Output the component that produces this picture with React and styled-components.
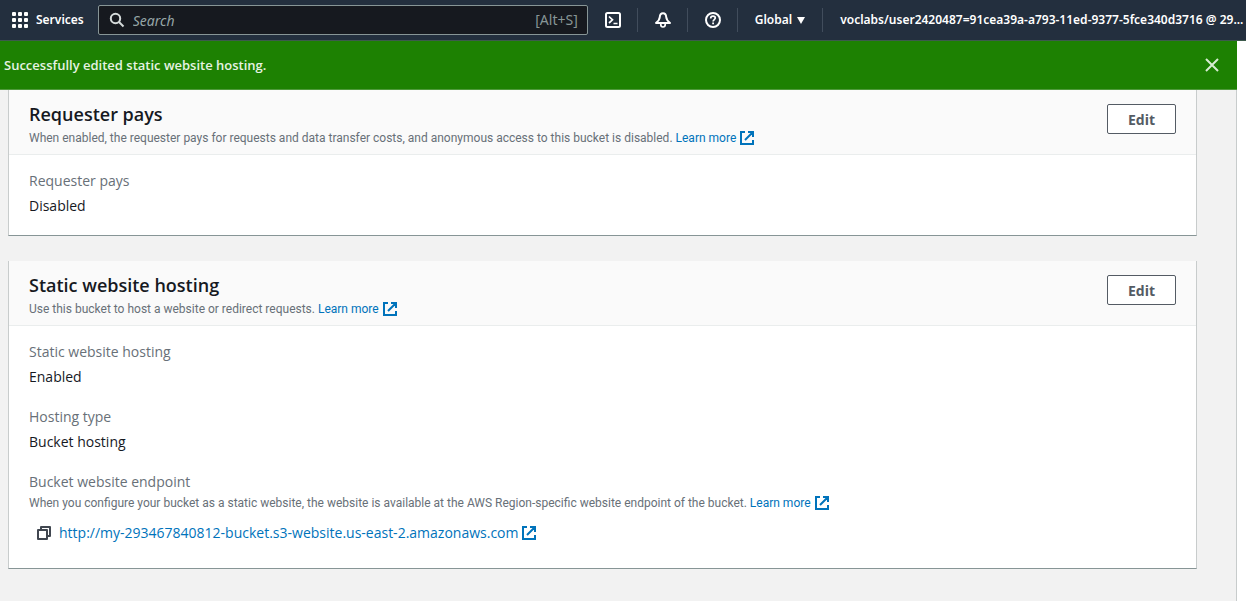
import React from "react";
import styled, { createGlobalStyle } from "styled-components";

const GlobalStyle = createGlobalStyle`
  *, *::before, *::after { box-sizing: border-box; }
  body {
    margin: 0;
    background: #f2f2f2;
    color: #16191f;
    font-family: "Open Sans", "Noto Sans", sans-serif;
    font-size: 14px;
    line-height: 20px;
  }
  button, input { font-family: inherit; }
`;

const Page = styled.div`
  display: flex;
  flex-direction: column;
  min-height: 100vh;
`;

const TopNav = styled.header`
  display: flex;
  align-items: center;
  height: 41px;
  background: #232f3e;
  border-bottom: 1px solid #3d5a4c;
  color: #fff;
  font-family: "Noto Sans", "Open Sans", sans-serif;
`;

const NavButton = styled.button`
  display: flex;
  align-items: center;
  justify-content: center;
  gap: ${(p) => p.$gap || 0}px;
  height: 24px;
  flex: none;
  padding: 0 ${(p) => p.$end ?? 17}px 0 ${(p) => p.$start ?? 17}px;
  border: 0;
  background: none;
  color: #fff;
  font-size: 12px;
  font-weight: 600;
  line-height: 16px;
  white-space: nowrap;
`;

const IconButton = styled(NavButton)`
  width: 49px;
  padding: 0 0 0 1px;
`;

const Divided = styled.div`
  display: flex;
  flex: none;
  border-right: 1px solid #414d5c;
`;

const SearchBox = styled.label`
  display: flex;
  align-items: center;
  flex: 0 1 490px;
  gap: 8px;
  height: 30px;
  padding: 0 9px 0 10px;
  border: 1px solid #879596;
  border-radius: 2px;
  background: #16191f;
  color: #d5dbdb;
`;

const SearchInput = styled.input`
  flex: 1;
  min-width: 0;
  padding: 0;
  border: 0;
  outline: 0;
  background: none;
  color: #fff;
  font-size: 14px;
  &::placeholder {
    color: #95a5a6;
    font-style: italic;
    opacity: 1;
  }
`;

const Shortcut = styled.span`
  color: #879596;
  font-size: 14px;
`;

const Body = styled.div`
  flex: 1;
  display: flex;
  flex-direction: column;
  margin-right: 9px;
  box-shadow: 9px 0 0 #fff;
`;

const Flash = styled.div`
  display: flex;
  align-items: center;
  justify-content: space-between;
  height: 49px;
  padding: 0 17px 0 4px;
  background: #1d8102;
  border-bottom: 1px solid #4f9a3c;
  color: #e6f3e2;
  font-size: 13px;
  font-weight: 600;
`;

const CloseButton = styled.button`
  display: flex;
  padding: 0;
  border: 0;
  background: none;
  color: #d8ecd3;
`;

const Main = styled.main`
  flex: 1;
  display: flex;
  flex-direction: column;
  gap: 25px;
  padding: 0 39px 32px 8px;
  border-right: 1px solid #c8cccc;
`;

const Panel = styled.section`
  background: #fff;
  border: solid #c8cccc;
  border-width: 0 1px;
  border-bottom: 1px solid #879596;
`;

const PanelHeader = styled.div`
  display: flex;
  align-items: flex-start;
  justify-content: space-between;
  padding: 14px 20px 6px;
  background: #fafafa;
  border-bottom: 1px solid #eaeded;
`;

const Title = styled.h2`
  margin: 0;
  font-size: 18px;
  font-weight: 600;
  line-height: 20px;
`;

const Hint = styled.p`
  margin: 0;
  padding-top: ${(p) => p.$gap}px;
  color: #687078;
  font-family: Roboto, "Noto Sans", sans-serif;
  font-size: 12px;
  line-height: 20px;
`;

const EditButton = styled.button`
  width: 69px;
  height: 30px;
  padding: 0;
  border: 1px solid #545b64;
  border-radius: 2px;
  background: #fff;
  color: #545b64;
  font-size: 14px;
  font-weight: 700;
`;

const Fields = styled.dl`
  display: flex;
  flex-direction: column;
  gap: 20px;
  margin: 0;
  padding: 16px 20px 19px;
`;

const Term = styled.dt`
  color: #687078;
`;

const Value = styled.dd`
  margin: 0;
  padding-top: 5px;
`;

const Endpoint = styled.dd`
  display: flex;
  align-items: center;
  gap: 8px;
  margin: 0;
  padding: 10px 8px 6px;
`;

const CopyButton = styled.button`
  display: flex;
  padding: 0;
  border: 0;
  background: none;
  color: #414750;
`;

const Link = styled.a`
  display: inline-flex;
  align-items: center;
  gap: 4px;
  color: #0073bb;
  text-decoration: none;
`;

const ExternalIcon = () => (
  <svg width="14" height="14" viewBox="0 0 14 14" fill="none" stroke="currentColor" strokeWidth="2" aria-hidden="true">
    <path d="M5 1H1v12h12V9M8 1h5v5M13 1 5 9" />
  </svg>
);

const ExternalLink = ({ children }) => (
  <Link href="#">
    {children}
    <ExternalIcon />
  </Link>
);

const SettingsPanel = ({ title, hint, children }) => (
  <Panel>
    <PanelHeader>
      <div>
        <Title>{title}</Title>
        <Hint $gap={4}>
          {hint} <ExternalLink>Learn more</ExternalLink>
        </Hint>
      </div>
      <EditButton type="button">Edit</EditButton>
    </PanelHeader>
    <Fields>{children}</Fields>
  </Panel>
);

const Field = ({ label, value }) => (
  <div>
    <Term>{label}</Term>
    <Value>{value}</Value>
  </div>
);

export default function App() {
  return (
    <Page>
      <GlobalStyle />
      <TopNav>
        <NavButton type="button" $gap={8} $start={12} $end={14}>
          <svg width="16" height="16" viewBox="0 0 16 16" fill="currentColor" aria-hidden="true">
            {[0, 6, 12].map((y) => [0, 6, 12].map((x) => <rect key={`${x}-${y}`} x={x} y={y} width="4" height="4" rx="1" />))}
          </svg>
          Services
        </NavButton>
        <SearchBox>
          <svg width="16" height="16" viewBox="0 0 16 16" fill="none" stroke="currentColor" strokeWidth="2" aria-hidden="true">
            <circle cx="6.5" cy="6.5" r="4.7" />
            <path d="m10 10 4.5 4.5" />
          </svg>
          <SearchInput type="text" placeholder="Search" aria-label="Search" />
          <Shortcut>[Alt+S]</Shortcut>
        </SearchBox>
        <Divided>
          <IconButton type="button" aria-label="CloudShell">
            <svg width="16" height="16" viewBox="0 0 16 16" fill="none" stroke="currentColor" strokeWidth="2" aria-hidden="true">
              <rect x="1" y="1" width="14" height="14" rx="1.5" />
              <path d="m4 4.5 3.5 3.3L4 11M8.5 11.5h4" strokeWidth="1.7" />
            </svg>
          </IconButton>
        </Divided>
        <Divided>
          <IconButton type="button" aria-label="Notifications">
            <svg width="16" height="16" viewBox="0 0 16 16" fill="none" stroke="currentColor" strokeWidth="2" strokeLinejoin="round" aria-hidden="true">
              <path d="M8 1.2C6 1.2 4.9 2.7 4.8 5 4.6 7.5 3.5 9 1 11h14c-2.5-2-3.600-3.500-3.800-6C11.100 2.700 10 1.200 8 1.200Z" />
              <path d="M5.800 11.500v1.300c0 1.300.9 2.200 2.200 2.200s2.200-.9 2.200-2.200v-1.300" strokeWidth="1.700" />
            </svg>
          </IconButton>
        </Divided>
        <Divided>
          <IconButton type="button" aria-label="Help">
            <svg width="16" height="16" viewBox="0 0 16 16" fill="none" stroke="currentColor" strokeWidth="2" aria-hidden="true">
              <circle cx="8" cy="8" r="7" />
              <path d="M5.700 6.400c0-1.400 1-2.300 2.300-2.300s2.300.8 2.300 2c0 1.500-2.200 1.600-2.200 3.400" strokeWidth="1.700" />
              <path d="M7.200 10.600H9v1.700H7.200z" fill="currentColor" stroke="none" />
            </svg>
          </IconButton>
        </Divided>
        <Divided>
          <NavButton type="button" $gap={5}>
            Global
            <svg width="8" height="7" viewBox="0 0 8 7" fill="currentColor" aria-hidden="true">
              <path d="M0 0h8L4 7z" />
            </svg>
          </NavButton>
        </Divided>
        <NavButton type="button" $end={2}>
          voclabs/user2420487=91cea39a-a793-11ed-9377-5fce340d3716 @ 29...
        </NavButton>
      </TopNav>
      <Body>
        <Flash role="status">
          Successfully edited static website hosting.
          <CloseButton type="button" aria-label="Dismiss">
            <svg width="16" height="16" viewBox="0 0 16 16" fill="none" stroke="currentColor" strokeWidth="2" aria-hidden="true">
              <path d="m2 2 12 12M14 2 2 14" />
            </svg>
          </CloseButton>
        </Flash>
        <Main>
          <SettingsPanel
            title="Requester pays"
            hint="When enabled, the requester pays for requests and data transfer costs, and anonymous access to this bucket is disabled."
          >
            <Field label="Requester pays" value="Disabled" />
          </SettingsPanel>
          <SettingsPanel title="Static website hosting" hint="Use this bucket to host a website or redirect requests.">
            <Field label="Static website hosting" value="Enabled" />
            <Field label="Hosting type" value="Bucket hosting" />
            <div>
              <Term>Bucket website endpoint</Term>
              <Hint as="dd" $gap={1}>
                When you configure your bucket as a static website, the website is available at the AWS Region-specific
                website endpoint of the bucket. <ExternalLink>Learn more</ExternalLink>
              </Hint>
              <Endpoint>
                <CopyButton type="button" aria-label="Copy endpoint">
                  <svg width="14" height="14" viewBox="0 0 14 14" fill="none" stroke="currentColor" strokeWidth="2" strokeLinejoin="round" aria-hidden="true">
                    <path d="M4 4V1h9v9h-3" />
                    <path d="M1 4h9v9H1z" />
                  </svg>
                </CopyButton>
                <ExternalLink>http://my-293467840812-bucket.s3-website.us-east-2.amazonaws.com</ExternalLink>
              </Endpoint>
            </div>
          </SettingsPanel>
        </Main>
      </Body>
    </Page>
  );
}
